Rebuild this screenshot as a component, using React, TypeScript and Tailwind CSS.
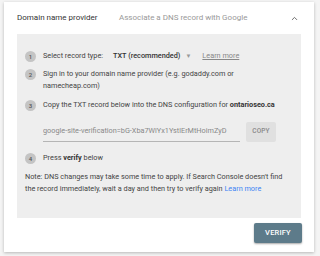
import { ChevronUp } from 'lucide-react'

function Step({ n, children, className = '' }: { n: number; children: React.ReactNode; className?: string }) {
  return (
    <div className={`flex items-start ${className}`}>
      <div className="w-[11px] h-[11px] rounded-full bg-[#c4c4c4] text-[#555] text-[6px] font-medium flex items-center justify-center shrink-0 mt-[0.5px] ml-[8px]">
        {n}
      </div>
      <div className="ml-[7px] text-[7.3px] leading-[12px] text-[#444]">{children}</div>
    </div>
  )
}

export default function App() {
  return (
    <div className="w-[320px] h-[256px] bg-[#f4f4f4] pt-[2px] pl-[4px] font-['Roboto',sans-serif] overflow-hidden">
      <div className="w-[310px] h-[250px] bg-white shadow-[0_1px_3px_rgba(0,0,0,0.25)] flex flex-col">
        {/* header */}
        <div className="h-[32px] flex items-center pl-[13px] pr-[15px]">
          <span className="text-[8px] text-[#333] w-[102px]">Domain name provider</span>
          <span className="text-[8px] text-[#999]">Associate a DNS record with Google</span>
          <ChevronUp className="ml-auto w-[9px] h-[9px] text-[#666]" strokeWidth={2.5} />
        </div>

        {/* instructions panel */}
        <div className="mx-[13px] h-[184px] bg-[#eeeeee] pt-[16px] flex flex-col">
          <Step n={1}>
            <span className="inline-flex items-center">
              <span className="w-[70px]">Select record type:</span>
              <span className="font-medium text-[#333]">TXT (recommended)</span>
              <span className="ml-[5px] text-[6px] text-[#999]">▼</span>
              <span className="ml-[11px] text-[#888] underline">Learn more</span>
            </span>
          </Step>
          <Step n={2} className="mt-[6px]">
            Sign in to your domain name provider (e.g. godaddy.com or
            <br />
            namecheap.com)
          </Step>
          <Step n={3} className="mt-[7px]">
            Copy the TXT record below into the DNS configuration for <span className="font-bold text-[#333]">ontarioseo.ca</span>
          </Step>

          {/* record value */}
          <div className="mt-[11px] ml-[26px] flex items-center">
            <div className="w-[197px] h-[20px] flex items-center border-b border-[#b5b5b5] overflow-hidden whitespace-nowrap text-[7.3px] text-[#888]">
              <span>google-site-verification=bG-Xba7WiYx1YstlErMtHoimZyD</span>
            </div>
            <div className="ml-[6px] w-[30px] h-[20px] bg-[#e0e0e0] rounded-[2px] flex items-center justify-center text-[6.5px] font-medium tracking-wide text-[#888]">
              COPY
            </div>
          </div>

          <Step n={4} className="mt-[10px]">
            Press <span className="font-bold text-[#333]">verify</span> below
          </Step>

          <p className="mt-[7px] ml-[8px] text-[7.3px] leading-[12px] text-[#444]">
            Note: DNS changes may take some time to apply. If Search Console doesn't find
            <br />
            the record immediately, wait a day and then try to verify again{' '}
            <span className="text-[#4285f4]">Learn more</span>
          </p>
        </div>

        {/* actions */}
        <div className="flex justify-end pr-[12px] pt-[5px]">
          <button className="w-[48px] h-[20px] bg-[#5d7b8a] rounded-[2px] shadow-[0_1px_2px_rgba(0,0,0,0.35)] text-white text-[7.5px] font-medium tracking-wide">
            VERIFY
          </button>
        </div>
      </div>
    </div>
  )
}
